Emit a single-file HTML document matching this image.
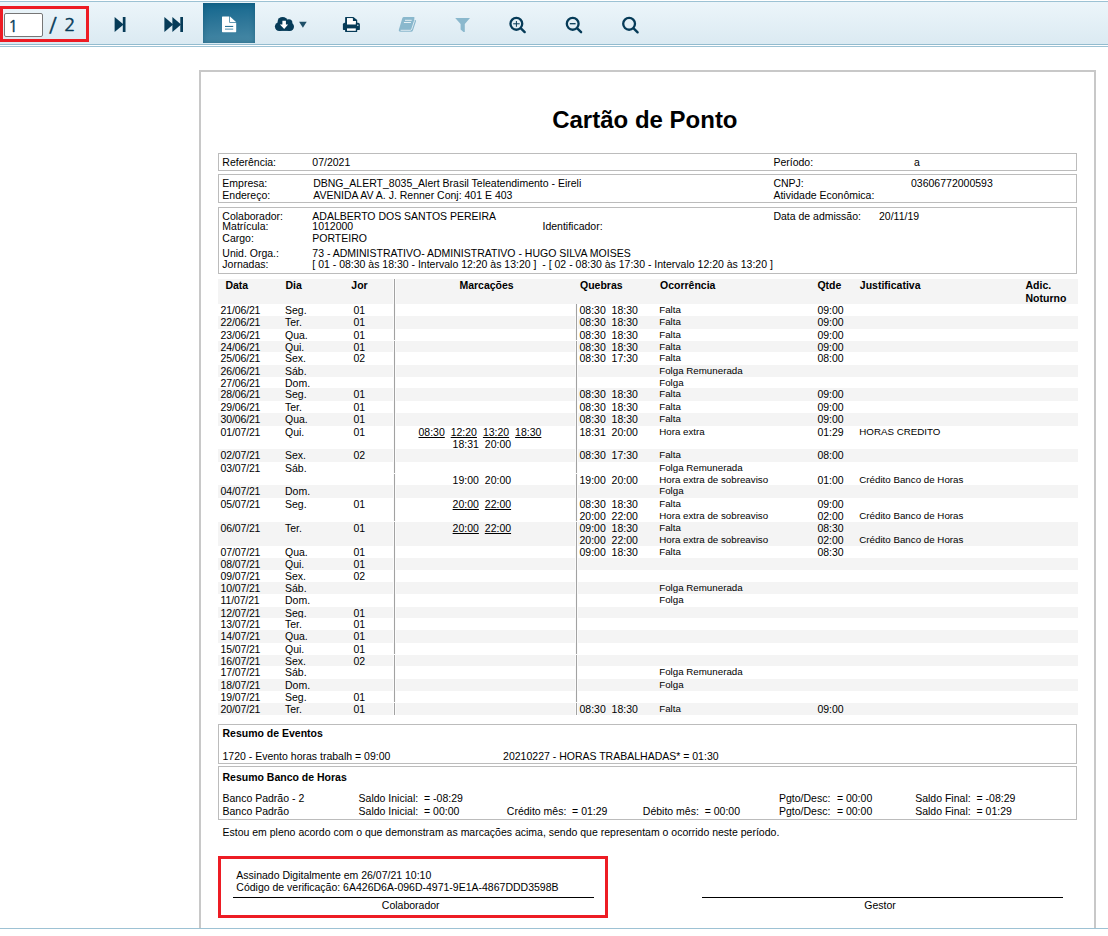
<!DOCTYPE html>
<html lang="pt-BR"><head><meta charset="utf-8"><title>Cartão de Ponto</title>
<style>
html,body{margin:0;padding:0;background:#fff;}
body{width:1108px;height:936px;overflow:hidden;position:relative;font-family:"Liberation Sans",Arial,sans-serif;color:#000;}
.r{position:absolute;box-sizing:content-box;}
.t{position:absolute;white-space:pre;line-height:14px;font-size:10.5px;}
.u{text-decoration:underline;}
.ng{font-family:"NanumGothic","Liberation Sans",sans-serif;color:#063b58;-webkit-text-stroke:0.45px #063b58;}
</style></head><body>
<div id="page">
<div class="r" style="left:199px;top:70px;width:893px;height:880px;border:2px solid #c8c8c8;"></div>
<div class="t " style="left:552.2px;top:113.3px;font-size:24px;font-weight:bold;line-height:28px;margin-top:-7px;">Cartão de Ponto</div>
<div class="r" style="left:218px;top:153px;width:857px;height:16px;border:1px solid #bcbcbc;"></div>
<div class="r" style="left:218px;top:174px;width:857px;height:27px;border:1px solid #bcbcbc;"></div>
<div class="r" style="left:218px;top:207px;width:857px;height:65px;border:1px solid #bcbcbc;"></div>
<div class="t " style="left:222.3px;top:154.8px;font-size:10.5px;">Referência:</div>
<div class="t " style="left:312.3px;top:154.8px;font-size:10.5px;">07/2021</div>
<div class="t " style="left:773.4px;top:154.8px;font-size:10.5px;">Período:</div>
<div class="t " style="left:914.0px;top:154.8px;font-size:10.5px;">a</div>
<div class="t " style="left:222.3px;top:176.2px;font-size:10.5px;">Empresa:</div>
<div class="t " style="left:313.2px;top:176.2px;font-size:10.5px;">DBNG_ALERT_8035_Alert Brasil Teleatendimento - Eireli</div>
<div class="t " style="left:222.3px;top:188.2px;font-size:10.5px;">Endereço:</div>
<div class="t " style="left:313.2px;top:188.2px;font-size:10.5px;">AVENIDA AV A. J. Renner Conj: 401 E 403</div>
<div class="t " style="left:773.4px;top:176.2px;font-size:10.5px;">CNPJ:</div>
<div class="t " style="left:911.0px;top:176.2px;font-size:10.5px;">03606772000593</div>
<div class="t " style="left:773.4px;top:188.2px;font-size:10.5px;">Atividade Econômica:</div>
<div class="t " style="left:222.3px;top:209.0px;font-size:10.5px;">Colaborador:</div>
<div class="t " style="left:312.3px;top:209.0px;font-size:10.5px;">ADALBERTO DOS SANTOS PEREIRA</div>
<div class="t " style="left:773.4px;top:209.0px;font-size:10.5px;">Data de admissão:</div>
<div class="t " style="left:879.0px;top:209.0px;font-size:10.5px;">20/11/19</div>
<div class="t " style="left:222.3px;top:219.0px;font-size:10.5px;">Matrícula:</div>
<div class="t " style="left:312.3px;top:219.0px;font-size:10.5px;">1012000</div>
<div class="t " style="left:542.5px;top:219.0px;font-size:10.5px;">Identificador:</div>
<div class="t " style="left:222.3px;top:231.3px;font-size:10.5px;">Cargo:</div>
<div class="t " style="left:312.3px;top:231.3px;font-size:10.5px;">PORTEIRO</div>
<div class="t " style="left:222.3px;top:245.5px;font-size:10.5px;">Unid. Orga.:</div>
<div class="t " style="left:312.3px;top:245.5px;font-size:10.5px;">73 - ADMINISTRATIVO- ADMINISTRATIVO - HUGO SILVA MOISES</div>
<div class="t " style="left:222.3px;top:257.2px;font-size:10.5px;">Jornadas:</div>
<div class="t " style="left:312.3px;top:257.2px;font-size:10.5px;">[ 01 - 08:30 às 18:30 - Intervalo 12:20 às 13:20 ]  - [ 02 - 08:30 às 17:30 - Intervalo 12:20 às 13:20 ]</div>
<div class="r" style="left:218.0px;top:279.0px;width:860.0px;height:25.0px;background:#f4f4f4;"></div>
<div class="t " style="left:225.4px;top:277.8px;font-size:10.5px;font-weight:bold;">Data</div>
<div class="t " style="left:285.4px;top:277.8px;font-size:10.5px;font-weight:bold;">Dia</div>
<div class="t " style="left:351.3px;top:277.8px;font-size:10.5px;font-weight:bold;">Jor</div>
<div class="t " style="left:459.4px;top:277.8px;font-size:10.5px;font-weight:bold;">Marcações</div>
<div class="t " style="left:580.0px;top:277.8px;font-size:10.5px;font-weight:bold;">Quebras</div>
<div class="t " style="left:660.0px;top:277.8px;font-size:10.5px;font-weight:bold;">Ocorrência</div>
<div class="t " style="left:817.4px;top:277.8px;font-size:10.5px;font-weight:bold;">Qtde</div>
<div class="t " style="left:859.8px;top:277.8px;font-size:10.5px;font-weight:bold;">Justificativa</div>
<div class="t " style="left:1025.5px;top:277.5px;font-size:10.5px;font-weight:bold;">Adic.</div>
<div class="t " style="left:1025.5px;top:290.6px;font-size:10.5px;font-weight:bold;">Noturno</div>
<div class="r" style="left:218.0px;top:316.0px;width:860.0px;height:12.6px;background:#f4f4f4;"></div>
<div class="r" style="left:218.0px;top:340.8px;width:860.0px;height:10.9px;background:#f4f4f4;"></div>
<div class="r" style="left:218.0px;top:364.9px;width:860.0px;height:11.8px;background:#f4f4f4;"></div>
<div class="r" style="left:218.0px;top:388.0px;width:860.0px;height:12.7px;background:#f4f4f4;"></div>
<div class="r" style="left:218.0px;top:413.0px;width:860.0px;height:12.8px;background:#f4f4f4;"></div>
<div class="r" style="left:218.0px;top:449.0px;width:860.0px;height:12.7px;background:#f4f4f4;"></div>
<div class="r" style="left:218.0px;top:485.3px;width:860.0px;height:12.4px;background:#f4f4f4;"></div>
<div class="r" style="left:218.0px;top:522.2px;width:860.0px;height:23.6px;background:#f4f4f4;"></div>
<div class="r" style="left:218.0px;top:558.0px;width:860.0px;height:12.0px;background:#f4f4f4;"></div>
<div class="r" style="left:218.0px;top:582.2px;width:860.0px;height:11.7px;background:#f4f4f4;"></div>
<div class="r" style="left:218.0px;top:607.3px;width:860.0px;height:10.6px;background:#f4f4f4;"></div>
<div class="r" style="left:218.0px;top:630.4px;width:860.0px;height:12.2px;background:#f4f4f4;"></div>
<div class="r" style="left:218.0px;top:654.9px;width:860.0px;height:10.9px;background:#f4f4f4;"></div>
<div class="r" style="left:218.0px;top:679.1px;width:860.0px;height:11.8px;background:#f4f4f4;"></div>
<div class="r" style="left:218.0px;top:703.1px;width:860.0px;height:11.8px;background:#f4f4f4;"></div>
<div class="t " style="left:220.5px;top:302.9px;font-size:10.5px;letter-spacing:-0.13px;">21/06/21</div>
<div class="t " style="left:285.0px;top:302.9px;font-size:10.5px;">Seg.</div>
<div class="t " style="left:353.5px;top:302.9px;font-size:10.5px;">01</div>
<div class="t " style="left:579.5px;top:302.9px;font-size:10.5px;">08:30  18:30</div>
<div class="t " style="left:659.2px;top:303.3px;font-size:9.75px;">Falta</div>
<div class="t " style="left:817.4px;top:302.9px;font-size:10.5px;">09:00</div>
<div class="t " style="left:220.5px;top:314.9px;font-size:10.5px;letter-spacing:-0.13px;">22/06/21</div>
<div class="t " style="left:285.0px;top:314.9px;font-size:10.5px;">Ter.</div>
<div class="t " style="left:353.5px;top:314.9px;font-size:10.5px;">01</div>
<div class="t " style="left:579.5px;top:314.9px;font-size:10.5px;">08:30  18:30</div>
<div class="t " style="left:659.2px;top:315.3px;font-size:9.75px;">Falta</div>
<div class="t " style="left:817.4px;top:314.9px;font-size:10.5px;">09:00</div>
<div class="t " style="left:220.5px;top:327.9px;font-size:10.5px;letter-spacing:-0.13px;">23/06/21</div>
<div class="t " style="left:285.0px;top:327.9px;font-size:10.5px;">Qua.</div>
<div class="t " style="left:353.5px;top:327.9px;font-size:10.5px;">01</div>
<div class="t " style="left:579.5px;top:327.9px;font-size:10.5px;">08:30  18:30</div>
<div class="t " style="left:659.2px;top:328.3px;font-size:9.75px;">Falta</div>
<div class="t " style="left:817.4px;top:327.9px;font-size:10.5px;">09:00</div>
<div class="t " style="left:220.5px;top:339.9px;font-size:10.5px;letter-spacing:-0.13px;">24/06/21</div>
<div class="t " style="left:285.0px;top:339.9px;font-size:10.5px;">Qui.</div>
<div class="t " style="left:353.5px;top:339.9px;font-size:10.5px;">01</div>
<div class="t " style="left:579.5px;top:339.9px;font-size:10.5px;">08:30  18:30</div>
<div class="t " style="left:659.2px;top:340.3px;font-size:9.75px;">Falta</div>
<div class="t " style="left:817.4px;top:339.9px;font-size:10.5px;">09:00</div>
<div class="t " style="left:220.5px;top:350.8px;font-size:10.5px;letter-spacing:-0.13px;">25/06/21</div>
<div class="t " style="left:285.0px;top:350.8px;font-size:10.5px;">Sex.</div>
<div class="t " style="left:353.5px;top:350.8px;font-size:10.5px;">02</div>
<div class="t " style="left:579.5px;top:350.8px;font-size:10.5px;">08:30  17:30</div>
<div class="t " style="left:659.2px;top:351.2px;font-size:9.75px;">Falta</div>
<div class="t " style="left:817.4px;top:350.8px;font-size:10.5px;">08:00</div>
<div class="t " style="left:220.5px;top:363.9px;font-size:10.5px;letter-spacing:-0.13px;">26/06/21</div>
<div class="t " style="left:285.0px;top:363.9px;font-size:10.5px;">Sáb.</div>
<div class="t " style="left:659.2px;top:364.3px;font-size:9.75px;">Folga Remunerada</div>
<div class="t " style="left:220.5px;top:375.7px;font-size:10.5px;letter-spacing:-0.13px;">27/06/21</div>
<div class="t " style="left:285.0px;top:375.7px;font-size:10.5px;">Dom.</div>
<div class="t " style="left:659.2px;top:376.1px;font-size:9.75px;">Folga</div>
<div class="t " style="left:220.5px;top:386.8px;font-size:10.5px;letter-spacing:-0.13px;">28/06/21</div>
<div class="t " style="left:285.0px;top:386.8px;font-size:10.5px;">Seg.</div>
<div class="t " style="left:353.5px;top:386.8px;font-size:10.5px;">01</div>
<div class="t " style="left:579.5px;top:386.8px;font-size:10.5px;">08:30  18:30</div>
<div class="t " style="left:659.2px;top:387.2px;font-size:9.75px;">Falta</div>
<div class="t " style="left:817.4px;top:386.8px;font-size:10.5px;">09:00</div>
<div class="t " style="left:220.5px;top:399.9px;font-size:10.5px;letter-spacing:-0.13px;">29/06/21</div>
<div class="t " style="left:285.0px;top:399.9px;font-size:10.5px;">Ter.</div>
<div class="t " style="left:353.5px;top:399.9px;font-size:10.5px;">01</div>
<div class="t " style="left:579.5px;top:399.9px;font-size:10.5px;">08:30  18:30</div>
<div class="t " style="left:659.2px;top:400.3px;font-size:9.75px;">Falta</div>
<div class="t " style="left:817.4px;top:399.9px;font-size:10.5px;">09:00</div>
<div class="t " style="left:220.5px;top:411.9px;font-size:10.5px;letter-spacing:-0.13px;">30/06/21</div>
<div class="t " style="left:285.0px;top:411.9px;font-size:10.5px;">Qua.</div>
<div class="t " style="left:353.5px;top:411.9px;font-size:10.5px;">01</div>
<div class="t " style="left:579.5px;top:411.9px;font-size:10.5px;">08:30  18:30</div>
<div class="t " style="left:659.2px;top:412.3px;font-size:9.75px;">Falta</div>
<div class="t " style="left:817.4px;top:411.9px;font-size:10.5px;">09:00</div>
<div class="t " style="left:220.5px;top:424.9px;font-size:10.5px;letter-spacing:-0.13px;">01/07/21</div>
<div class="t " style="left:285.0px;top:424.9px;font-size:10.5px;">Qui.</div>
<div class="t " style="left:353.5px;top:424.9px;font-size:10.5px;">01</div>
<div class="t u" style="left:418.5px;top:424.9px;font-size:10.5px;">08:30</div>
<div class="t u" style="left:450.7px;top:424.9px;font-size:10.5px;">12:20</div>
<div class="t u" style="left:482.9px;top:424.9px;font-size:10.5px;">13:20</div>
<div class="t u" style="left:515.1px;top:424.9px;font-size:10.5px;">18:30</div>
<div class="t " style="left:579.5px;top:424.9px;font-size:10.5px;">18:31  20:00</div>
<div class="t " style="left:659.2px;top:425.3px;font-size:9.75px;">Hora extra</div>
<div class="t " style="left:817.4px;top:424.9px;font-size:10.5px;">01:29</div>
<div class="t " style="left:859.3px;top:425.3px;font-size:9.75px;">HORAS CREDITO</div>
<div class="t " style="left:452.6px;top:436.6px;font-size:10.5px;">18:31</div>
<div class="t " style="left:484.8px;top:436.6px;font-size:10.5px;">20:00</div>
<div class="t " style="left:220.5px;top:447.8px;font-size:10.5px;letter-spacing:-0.13px;">02/07/21</div>
<div class="t " style="left:285.0px;top:447.8px;font-size:10.5px;">Sex.</div>
<div class="t " style="left:353.5px;top:447.8px;font-size:10.5px;">02</div>
<div class="t " style="left:579.5px;top:447.8px;font-size:10.5px;">08:30  17:30</div>
<div class="t " style="left:659.2px;top:448.2px;font-size:9.75px;">Falta</div>
<div class="t " style="left:817.4px;top:447.8px;font-size:10.5px;">08:00</div>
<div class="t " style="left:220.5px;top:460.9px;font-size:10.5px;letter-spacing:-0.13px;">03/07/21</div>
<div class="t " style="left:285.0px;top:460.9px;font-size:10.5px;">Sáb.</div>
<div class="t " style="left:659.2px;top:461.3px;font-size:9.75px;">Folga Remunerada</div>
<div class="t " style="left:452.6px;top:472.8px;font-size:10.5px;">19:00</div>
<div class="t " style="left:484.8px;top:472.8px;font-size:10.5px;">20:00</div>
<div class="t " style="left:579.5px;top:472.8px;font-size:10.5px;">19:00  20:00</div>
<div class="t " style="left:659.2px;top:473.2px;font-size:9.75px;">Hora extra de sobreaviso</div>
<div class="t " style="left:817.4px;top:472.8px;font-size:10.5px;">01:00</div>
<div class="t " style="left:859.3px;top:473.2px;font-size:9.75px;">Crédito Banco de Horas</div>
<div class="t " style="left:220.5px;top:483.9px;font-size:10.5px;letter-spacing:-0.13px;">04/07/21</div>
<div class="t " style="left:285.0px;top:483.9px;font-size:10.5px;">Dom.</div>
<div class="t " style="left:659.2px;top:484.3px;font-size:9.75px;">Folga</div>
<div class="t " style="left:220.5px;top:497.0px;font-size:10.5px;letter-spacing:-0.13px;">05/07/21</div>
<div class="t " style="left:285.0px;top:497.0px;font-size:10.5px;">Seg.</div>
<div class="t " style="left:353.5px;top:497.0px;font-size:10.5px;">01</div>
<div class="t u" style="left:452.6px;top:497.0px;font-size:10.5px;">20:00</div>
<div class="t u" style="left:484.8px;top:497.0px;font-size:10.5px;">22:00</div>
<div class="t " style="left:579.5px;top:497.0px;font-size:10.5px;">08:30  18:30</div>
<div class="t " style="left:659.2px;top:497.4px;font-size:9.75px;">Falta</div>
<div class="t " style="left:817.4px;top:497.0px;font-size:10.5px;">09:00</div>
<div class="t " style="left:579.5px;top:508.6px;font-size:10.5px;">20:00  22:00</div>
<div class="t " style="left:659.2px;top:509.0px;font-size:9.75px;">Hora extra de sobreaviso</div>
<div class="t " style="left:817.4px;top:508.6px;font-size:10.5px;">02:00</div>
<div class="t " style="left:859.3px;top:509.0px;font-size:9.75px;">Crédito Banco de Horas</div>
<div class="t " style="left:220.5px;top:520.6px;font-size:10.5px;letter-spacing:-0.13px;">06/07/21</div>
<div class="t " style="left:285.0px;top:520.6px;font-size:10.5px;">Ter.</div>
<div class="t " style="left:353.5px;top:520.6px;font-size:10.5px;">01</div>
<div class="t u" style="left:452.6px;top:520.6px;font-size:10.5px;">20:00</div>
<div class="t u" style="left:484.8px;top:520.6px;font-size:10.5px;">22:00</div>
<div class="t " style="left:579.5px;top:520.6px;font-size:10.5px;">09:00  18:30</div>
<div class="t " style="left:659.2px;top:521.0px;font-size:9.75px;">Falta</div>
<div class="t " style="left:817.4px;top:520.6px;font-size:10.5px;">08:30</div>
<div class="t " style="left:579.5px;top:532.6px;font-size:10.5px;">20:00  22:00</div>
<div class="t " style="left:659.2px;top:533.0px;font-size:9.75px;">Hora extra de sobreaviso</div>
<div class="t " style="left:817.4px;top:532.6px;font-size:10.5px;">02:00</div>
<div class="t " style="left:859.3px;top:533.0px;font-size:9.75px;">Crédito Banco de Horas</div>
<div class="t " style="left:220.5px;top:545.0px;font-size:10.5px;letter-spacing:-0.13px;">07/07/21</div>
<div class="t " style="left:285.0px;top:545.0px;font-size:10.5px;">Qua.</div>
<div class="t " style="left:353.5px;top:545.0px;font-size:10.5px;">01</div>
<div class="t " style="left:579.5px;top:545.0px;font-size:10.5px;">09:00  18:30</div>
<div class="t " style="left:659.2px;top:545.4px;font-size:9.75px;">Falta</div>
<div class="t " style="left:817.4px;top:545.0px;font-size:10.5px;">08:30</div>
<div class="t " style="left:220.5px;top:557.0px;font-size:10.5px;letter-spacing:-0.13px;">08/07/21</div>
<div class="t " style="left:285.0px;top:557.0px;font-size:10.5px;">Qui.</div>
<div class="t " style="left:353.5px;top:557.0px;font-size:10.5px;">01</div>
<div class="t " style="left:220.5px;top:569.0px;font-size:10.5px;letter-spacing:-0.13px;">09/07/21</div>
<div class="t " style="left:285.0px;top:569.0px;font-size:10.5px;">Sex.</div>
<div class="t " style="left:353.5px;top:569.0px;font-size:10.5px;">02</div>
<div class="t " style="left:220.5px;top:580.5px;font-size:10.5px;letter-spacing:-0.13px;">10/07/21</div>
<div class="t " style="left:285.0px;top:580.5px;font-size:10.5px;">Sáb.</div>
<div class="t " style="left:659.2px;top:580.9px;font-size:9.75px;">Folga Remunerada</div>
<div class="t " style="left:220.5px;top:593.1px;font-size:10.5px;letter-spacing:-0.13px;">11/07/21</div>
<div class="t " style="left:285.0px;top:593.1px;font-size:10.5px;">Dom.</div>
<div class="t " style="left:659.2px;top:592.5px;font-size:9.75px;">Folga</div>
<div class="t " style="left:220.5px;top:605.8px;font-size:10.5px;letter-spacing:-0.13px;">12/07/21</div>
<div class="t " style="left:285.0px;top:605.8px;font-size:10.5px;height:12.2px;overflow:hidden;">Seg.</div>
<div class="t " style="left:353.5px;top:605.8px;font-size:10.5px;">01</div>
<div class="t " style="left:220.5px;top:616.7px;font-size:10.5px;letter-spacing:-0.13px;">13/07/21</div>
<div class="t " style="left:285.0px;top:616.7px;font-size:10.5px;">Ter.</div>
<div class="t " style="left:353.5px;top:616.7px;font-size:10.5px;">01</div>
<div class="t " style="left:220.5px;top:629.0px;font-size:10.5px;letter-spacing:-0.13px;">14/07/21</div>
<div class="t " style="left:285.0px;top:629.0px;font-size:10.5px;">Qua.</div>
<div class="t " style="left:353.5px;top:629.0px;font-size:10.5px;">01</div>
<div class="t " style="left:220.5px;top:641.7px;font-size:10.5px;letter-spacing:-0.13px;">15/07/21</div>
<div class="t " style="left:285.0px;top:641.7px;font-size:10.5px;">Qui.</div>
<div class="t " style="left:353.5px;top:641.7px;font-size:10.5px;">01</div>
<div class="t " style="left:220.5px;top:653.9px;font-size:10.5px;letter-spacing:-0.13px;">16/07/21</div>
<div class="t " style="left:285.0px;top:653.9px;font-size:10.5px;">Sex.</div>
<div class="t " style="left:353.5px;top:653.9px;font-size:10.5px;">02</div>
<div class="t " style="left:220.5px;top:665.0px;font-size:10.5px;letter-spacing:-0.13px;">17/07/21</div>
<div class="t " style="left:285.0px;top:665.0px;font-size:10.5px;">Sáb.</div>
<div class="t " style="left:659.2px;top:665.4px;font-size:9.75px;">Folga Remunerada</div>
<div class="t " style="left:220.5px;top:678.1px;font-size:10.5px;letter-spacing:-0.13px;">18/07/21</div>
<div class="t " style="left:285.0px;top:678.1px;font-size:10.5px;">Dom.</div>
<div class="t " style="left:659.2px;top:677.5px;font-size:9.75px;">Folga</div>
<div class="t " style="left:220.5px;top:690.2px;font-size:10.5px;letter-spacing:-0.13px;">19/07/21</div>
<div class="t " style="left:285.0px;top:690.2px;font-size:10.5px;">Seg.</div>
<div class="t " style="left:353.5px;top:690.2px;font-size:10.5px;">01</div>
<div class="t " style="left:220.5px;top:702.0px;font-size:10.5px;letter-spacing:-0.13px;">20/07/21</div>
<div class="t " style="left:285.0px;top:702.0px;font-size:10.5px;">Ter.</div>
<div class="t " style="left:353.5px;top:702.0px;font-size:10.5px;">01</div>
<div class="t " style="left:579.5px;top:702.0px;font-size:10.5px;">08:30  18:30</div>
<div class="t " style="left:659.2px;top:702.4px;font-size:9.75px;">Falta</div>
<div class="t " style="left:817.4px;top:702.0px;font-size:10.5px;">09:00</div>
<div class="r" style="left:393.0px;top:279.0px;width:3.0px;height:436.0px;background:#fbfbfb;"></div>
<div class="r" style="left:575.0px;top:304.0px;width:3.0px;height:411.0px;background:#fbfbfb;"></div>
<div class="r" style="left:394.0px;top:279.0px;width:1.0px;height:436.0px;background:#a2a2a2;"></div>
<div class="r" style="left:576.0px;top:304.0px;width:1.0px;height:411.0px;background:#a2a2a2;"></div>
<div class="r" style="left:394.0px;top:340.0px;width:1.0px;height:1.0px;background:#fbfbfb;"></div>
<div class="r" style="left:576.0px;top:340.0px;width:1.0px;height:1.0px;background:#fbfbfb;"></div>
<div class="r" style="left:394.0px;top:473.0px;width:1.0px;height:1.0px;background:#fbfbfb;"></div>
<div class="r" style="left:576.0px;top:473.0px;width:1.0px;height:1.0px;background:#fbfbfb;"></div>
<div class="r" style="left:394.0px;top:521.0px;width:1.0px;height:1.0px;background:#fbfbfb;"></div>
<div class="r" style="left:576.0px;top:521.0px;width:1.0px;height:1.0px;background:#fbfbfb;"></div>
<div class="r" style="left:394.0px;top:654.0px;width:1.0px;height:1.0px;background:#fbfbfb;"></div>
<div class="r" style="left:576.0px;top:654.0px;width:1.0px;height:1.0px;background:#fbfbfb;"></div>
<div class="r" style="left:394.0px;top:702.0px;width:1.0px;height:1.0px;background:#fbfbfb;"></div>
<div class="r" style="left:576.0px;top:702.0px;width:1.0px;height:1.0px;background:#fbfbfb;"></div>
<div class="r" style="left:218px;top:724px;width:857px;height:38px;border:1px solid #bcbcbc;"></div>
<div class="t " style="left:222.5px;top:725.5px;font-size:10.5px;font-weight:bold;">Resumo de Eventos</div>
<div class="t " style="left:222.5px;top:749.1px;font-size:10.5px;">1720 - Evento horas trabalh = 09:00</div>
<div class="t " style="left:503.1px;top:749.1px;font-size:10.5px;">20210227 - HORAS TRABALHADAS* = 01:30</div>
<div class="r" style="left:218px;top:766px;width:857px;height:52px;border:1px solid #bcbcbc;"></div>
<div class="t " style="left:222.5px;top:770.3px;font-size:10.5px;font-weight:bold;">Resumo Banco de Horas</div>
<div class="t " style="left:222.5px;top:791.0px;font-size:10.5px;">Banco Padrão - 2</div>
<div class="t " style="left:358.6px;top:791.0px;font-size:10.5px;">Saldo Inicial:</div>
<div class="t " style="left:424.0px;top:791.0px;font-size:10.5px;">= -08:29</div>
<div class="t " style="left:779.0px;top:791.0px;font-size:10.5px;">Pgto/Desc:</div>
<div class="t " style="left:836.9px;top:791.0px;font-size:10.5px;">= 00:00</div>
<div class="t " style="left:915.2px;top:791.0px;font-size:10.5px;">Saldo Final:</div>
<div class="t " style="left:976.5px;top:791.0px;font-size:10.5px;">= -08:29</div>
<div class="t " style="left:222.5px;top:803.9px;font-size:10.5px;">Banco Padrão</div>
<div class="t " style="left:358.6px;top:803.9px;font-size:10.5px;">Saldo Inicial:</div>
<div class="t " style="left:424.0px;top:803.9px;font-size:10.5px;">= 00:00</div>
<div class="t " style="left:506.8px;top:803.9px;font-size:10.5px;">Crédito mês:</div>
<div class="t " style="left:572.1px;top:803.9px;font-size:10.5px;">= 01:29</div>
<div class="t " style="left:642.8px;top:803.9px;font-size:10.5px;">Débito mês:</div>
<div class="t " style="left:704.7px;top:803.9px;font-size:10.5px;">= 00:00</div>
<div class="t " style="left:779.0px;top:803.9px;font-size:10.5px;">Pgto/Desc:</div>
<div class="t " style="left:836.9px;top:803.9px;font-size:10.5px;">= 00:00</div>
<div class="t " style="left:915.2px;top:803.9px;font-size:10.5px;">Saldo Final:</div>
<div class="t " style="left:976.5px;top:803.9px;font-size:10.5px;">= 01:29</div>
<div class="t " style="left:222.5px;top:825.1px;font-size:10.5px;">Estou em pleno acordo com o que demonstram as marcações acima, sendo que representam o ocorrido neste período.</div>
<div class="r" style="left:218px;top:856px;width:384px;height:56px;border:3px solid #ed1c24;"></div>
<div class="t " style="left:236.3px;top:867.7px;font-size:10.5px;">Assinado Digitalmente em 26/07/21 10:10</div>
<div class="t " style="left:236.3px;top:879.9px;font-size:10.5px;">Código de verificação: 6A426D6A-096D-4971-9E1A-4867DDD3598B</div>
<div class="r" style="left:233.0px;top:897.0px;width:361.0px;height:1.0px;background:#000;"></div>
<div class="t " style="left:381.8px;top:897.7px;font-size:10.5px;">Colaborador</div>
<div class="r" style="left:702.0px;top:897.0px;width:361.0px;height:1.0px;background:#000;"></div>
<div class="t " style="left:864.3px;top:897.5px;font-size:10.5px;">Gestor</div>
</div>
<div id="toolbar">

<div class="r" style="left:0;top:1px;width:1108px;height:1px;background:#9dc2d4"></div>
<div class="r" style="left:0;top:2px;width:1108px;height:42px;background:linear-gradient(#ecf5fa,#dbeaf2)"></div>
<div class="r" style="left:0;top:44px;width:1108px;height:1px;background:#93bccf"></div>
<div class="r" style="left:0;top:46px;width:1108px;height:1px;background:#9dc2d4"></div>
<div class="r" style="left:0;top:928px;width:1108px;height:1px;background:#9dc2d4"></div>
<div class="r" style="left:0;top:929px;width:1108px;height:7px;background:#fff"></div>
<div class="r" style="left:0px;top:6px;width:83px;height:30px;border:3px solid #ed1c24;"></div>
<div class="r" style="left:4px;top:13px;width:37px;height:22px;border:1px solid #767676;border-radius:2px;background:#fff"></div>
<div class="t ng" id="pg1" style="left:8.3px;top:16.2px;font-size:16px;line-height:20px;">1</div>
<div class="t ng" id="sl" style="left:49px;top:13.4px;font-size:20px;line-height:24px;">/</div>
<div class="t ng" id="pg2" style="left:64.2px;top:13.9px;font-size:18.3px;line-height:22px;">2</div>
<div class="r" style="left:203px;top:3px;width:52px;height:40px;background:linear-gradient(175deg,#14678e 5%,#2f7799 50%,#4688a5 95%);box-shadow:inset 0 0 5px rgba(8,70,100,.45)"></div>
<svg class="r" style="left:0;top:0" width="1108" height="48" viewBox="0 0 1108 48">
 <g fill="#063b58">
  <path d="M114.6 17 L123.6 24.5 L114.6 32 Z"/><rect x="122.8" y="17" width="2.7" height="15"/>
  <path d="M164.4 17 L173.2 24.5 L164.4 32 Z"/><path d="M172.4 17 L181.1 24.5 L172.4 32 Z"/><rect x="180.3" y="17" width="2.7" height="15"/>
 </g>
 <!-- file-text -->
 <g fill="#fff">
  <path d="M222.6 16.5 H229.3 V22.8 H236.2 V31.6 Q236.2 32.2 235.6 32.2 H222.6 Q222 32.2 222 31.6 V17.1 Q222 16.5 222.6 16.5 Z"/>
  <path d="M230 16.6 L236 22.1 H230 Z"/>
 </g>
 <rect fill="#2d7497" x="225" y="25.9" width="8.2" height="1.1"/><rect fill="#78abc2" x="225" y="28.5" width="8.2" height="1.3"/>
 <!-- cloud-download -->
 <g fill="#063b58">
  <circle cx="282.6" cy="21.9" r="5.0"/>
  <circle cx="288.8" cy="22.9" r="3.6"/>
  <circle cx="279.2" cy="26.6" r="4.3"/>
  <circle cx="289.8" cy="26.8" r="4.2"/>
  <rect x="279" y="23" width="11" height="7.9"/>
 </g>
 <path fill="#fff" d="M282.4 20.8 H285.9 V24.4 H288.1 L284.2 29 L279.9 24.4 H282.4 Z"/>
 <path fill="#1f4f68" d="M299.1 21.8 H306.7 L302.9 27.7 Z"/>
 <!-- print -->
 <g>
  <path fill="#063b58" d="M345.1 25 V17.5 Q345.1 16.9 345.7 16.9 H353.4 L357.2 20 V25 Z"/>
  <path fill="#fff" d="M347 18.2 H352.7 V21 H355.8 V24.8 H347 Z"/>
  <path fill="#063b58" d="M344.7 22.8 H358.1 Q359.9 22.8 359.9 24.6 V29.3 Q359.9 29.9 359.3 29.9 H343.5 Q342.9 29.9 342.9 29.3 V24.6 Q342.9 22.8 344.7 22.8 Z"/>
  <path fill="#fff" d="M347 18.2 H352.7 V21 H355.8 V24.5 H347 Z"/>
  <rect fill="#063b58" x="345.1" y="27" width="12.1" height="5.1" rx="0.5"/>
  <rect fill="#fff" x="347" y="28.4" width="8.8" height="2.4"/>
  <circle cx="357.8" cy="25.2" r="0.75" fill="#cfe3ec"/>
 </g>
 <!-- book (disabled) -->
 <g>
  <path fill="#8ab8cd" d="M403.9 16.9 H413.6 Q414.8 16.9 414.5 18.1 L414 19.8 L415.3 20 Q416.3 20.3 416 21.3 L413 30.3 Q412.5 31.8 411 31.8 H400.7 Q398.3 31.8 398.9 29.6 L402.3 18.2 Q402.7 16.9 403.9 16.9 Z"/>
  <path fill="none" stroke="#e6f1f6" stroke-width="1" d="M405 20.3 H411.7 M403.9 22.5 H410.9"/>
  <path fill="none" stroke="#e6f1f6" stroke-width="0.9" d="M400.6 30.3 H410.2 Q411.3 30.3 411.7 29.2 L414.6 20.3"/>
 </g>
 <!-- filter (disabled) -->
 <path fill="#8ab8cd" d="M455.2 18.1 H470 L464.8 24.1 V31.4 Q464.8 31.9 464.3 31.9 H463.5 L460.6 29.4 V24.1 Z"/>
 <!-- search icons -->
 <g fill="none" stroke="#063b58">
  <circle cx="516.35" cy="23.85" r="5.9" stroke-width="2.3"/>
  <path d="M520.9 28.4 L524.7 32.1" stroke-width="2.4" stroke-linecap="round"/>
  <path d="M513.2 23.8 H519.7 M516.4 21 V26.8" stroke-width="1"/>
  <circle cx="572.7" cy="23.85" r="5.9" stroke-width="2.3"/>
  <path d="M577.25 28.4 L581.1 32.2" stroke-width="2.4" stroke-linecap="round"/>
  <path d="M569.8 23.7 H575.6" stroke-width="1.3"/>
  <circle cx="629.1" cy="23.85" r="5.9" stroke-width="2.3"/>
  <path d="M633.6 28.4 L637.6 32.3" stroke-width="2.4" stroke-linecap="round"/>
 </g>
</svg>

</div>
</body></html>
